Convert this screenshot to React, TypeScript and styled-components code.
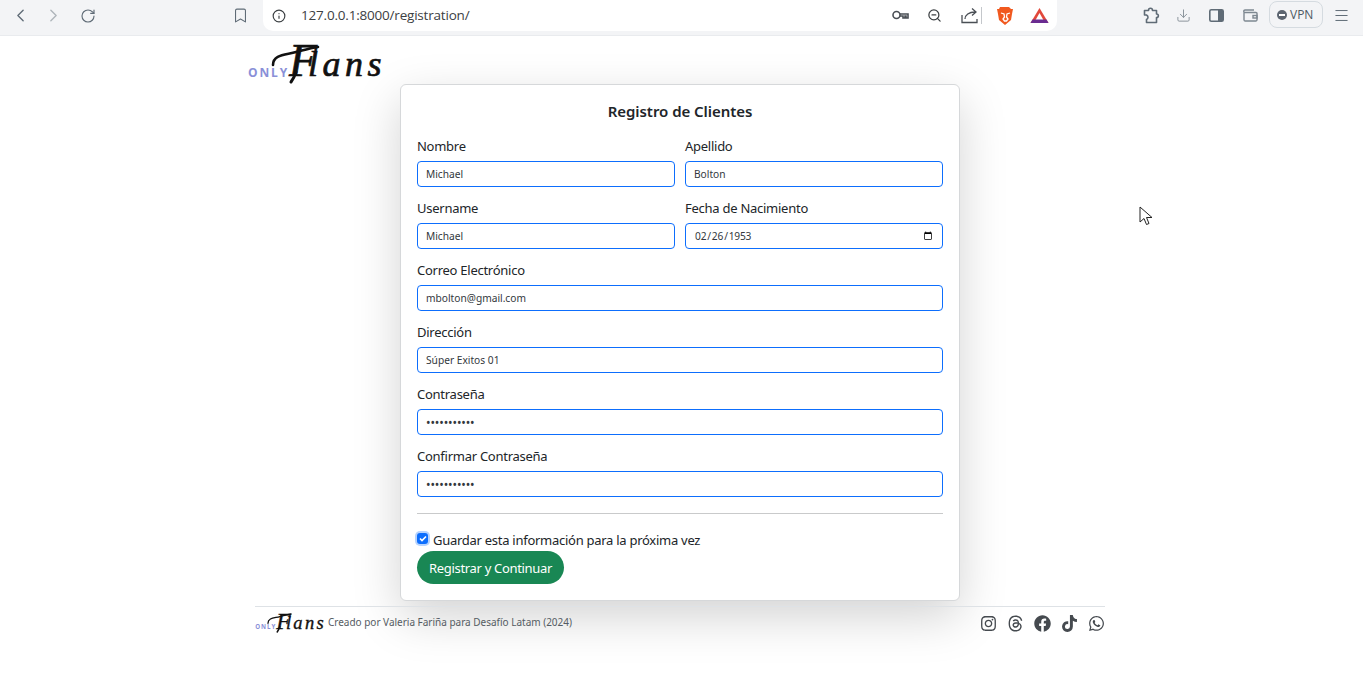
import React, {FC, ReactNode} from 'react';
import styled, {createGlobalStyle} from 'styled-components';
import {ChevronLeft, ChevronRight, RotateCw, Bookmark, Info, ZoomOut, Download, Menu} from 'lucide-react';
import {FaFacebook, FaInstagram, FaTiktok, FaWhatsapp} from 'react-icons/fa';
import {FaThreads} from 'react-icons/fa6';

const GlobalStyle = createGlobalStyle`
  *, *:before, *:after {
    box-sizing: border-box;
  }
  html, body {
    margin: 0;
    background: #fff;
    overflow: hidden;
  }
  body {
    font-family: "Noto Sans", "Open Sans", sans-serif;
    color: #212529;
  }
`;

const Page = styled.div`
  position: relative;
  width: 1363px;
  height: 682px;
  overflow: hidden;
`;

const Toolbar = styled.div`
  display: flex;
  align-items: flex-start;
  height: 36px;
  background: #f3f4f6;
  border-bottom: 1px solid #e9ebee;
`;

const Slot = styled.div<{$w: number; $ml?: number; $color?: string}>`
  display: flex;
  align-items: center;
  justify-content: center;
  flex: none;
  height: 31px;
  width: ${p => p.$w}px;
  margin-left: ${p => p.$ml ?? 0}px;
  color: ${p => p.$color ?? '#5f6b76'};
`;

const AddressBar = styled.div`
  display: flex;
  align-items: center;
  flex: none;
  width: 794px;
  height: 31px;
  margin-left: 11px;
  padding-left: 4px;
  background: #fff;
  border-radius: 0 0 10px 10px;
`;

const Url = styled.div`
  flex: 1;
  margin: -2px 0 0 10px;
  font-family: "Open Sans", sans-serif;
  font-size: 13.5px;
  letter-spacing: -0.2px;
  color: #3c4043;
`;

const Separator = styled.div`
  flex: none;
  width: 1px;
  height: 17px;
  background: #c4c7cb;
`;

const VpnPill = styled.div`
  display: flex;
  align-items: center;
  flex: none;
  gap: 3px;
  width: 54px;
  height: 27px;
  margin: 1px 0 0 7px;
  padding-left: 7px;
  border: 1px solid #d5dbe0;
  border-radius: 8px;
  font-family: "Open Sans", sans-serif;
  font-size: 12px;
  color: #4d5963;
`;

const VpnDot = styled.span`
  position: relative;
  width: 10px;
  height: 10px;
  border-radius: 50%;
  background: #5c6570;

  &:after {
    content: "";
    position: absolute;
    left: 2px;
    right: 2px;
    top: 4px;
    height: 2px;
    background: #fff;
  }
`;

const Main = styled.main`
  display: flex;
  flex-direction: column;
  align-items: center;
  width: 1360px;
`;

const Header = styled.header`
  width: 866px;
  height: 48px;
  padding: 9px 0 0 1px;
  line-height: 0;
`;

const Card = styled.form`
  width: 560px;
  height: 517px;
  padding: 15px 16px 16px;
  background: #fff;
  border: 1px solid #d6d8da;
  border-radius: 6px;
  box-shadow: 0 16px 48px rgba(0, 0, 0, 0.175);
`;

const Title = styled.h1`
  margin: 0 0 15px;
  font-size: 15px;
  line-height: 22px;
  font-weight: 600;
  letter-spacing: -0.05px;
  text-align: center;
`;

const Grid = styled.div`
  display: grid;
  grid-template-columns: 258px 258px;
  column-gap: 10px;
  row-gap: 12px;
`;

const Field = styled.label<{$wide?: boolean}>`
  display: block;
  height: 50px;
  grid-column: ${p => (p.$wide ? '1 / span 2' : 'auto')};
`;

const LabelText = styled.span`
  display: block;
  height: 24px;
  font-size: 13px;
  line-height: 18px;
  letter-spacing: -0.26px;
  color: #212529;
`;

const Input = styled.input`
  display: block;
  width: 100%;
  height: 26px;
  padding: 0 8px;
  background: #fff;
  border: 1px solid #0d6efd;
  border-radius: 4px;
  outline: none;
  font-family: inherit;
  font-size: 10.2px;
  color: #33383d;

  &[type='password'] {
    font-size: 12px;
    letter-spacing: -0.1px;
  }
  &[type='date'] {
    padding-right: 7px;
    letter-spacing: -0.2px;
  }
`;

const Divider = styled.hr`
  height: 1px;
  margin: 16px 0 16px;
  border: 0;
  background: #c9cacb;
`;

const CheckRow = styled.label`
  display: flex;
  align-items: center;
  gap: 5px;
  height: 21px;
  font-size: 13px;
  line-height: 21px;
  letter-spacing: -0.27px;
`;

const CheckBox = styled.span`
  display: flex;
  align-items: center;
  justify-content: center;
  flex: none;
  width: 11px;
  height: 11px;
  margin-bottom: 4px;
  background: #0d6efd;
  border-radius: 3px;
  box-shadow: 0 0 0 2px #b6d3fe;
  color: #fff;
`;

const SubmitButton = styled.button`
  display: block;
  height: 33px;
  padding: 0 12px 0 12px;
  background: #198754;
  border: 0;
  border-radius: 17px;
  font-family: inherit;
  font-size: 13px;
  letter-spacing: -0.32px;
  color: #fff;
`;

const Footer = styled.footer`
  display: flex;
  align-items: center;
  width: 850px;
  height: 33px;
  margin-top: 5px;
  border-top: 1px solid #dee2e6;
`;

const FooterText = styled.span`
  margin: -2px 0 0 5px;
  font-size: 10px;
  letter-spacing: -0.01px;
  color: #555c63;
`;

const Socials = styled.div`
  display: flex;
  align-items: center;
  gap: 10px;
  margin-left: auto;
  color: #454a4f;
  font-size: 17px;
`;

const CursorMark = styled.svg`
  position: absolute;
  left: 1139px;
  top: 206px;
`;

const Logo: FC<{small?: boolean}> = ({small}) => (
  <svg width={small ? 68 : 132} height={small ? 20 : 39} viewBox="0 0 132 39" overflow="visible">
    <text x="0" y="32" fontFamily="'Open Sans', sans-serif" fontWeight="700" fontSize="12" letterSpacing="1.9" fill="#8a90d8">ONLY</text>
    <path d="M25 20 C25 9 38 10 48 7 C56 5 63 3 70 2" fill="none" stroke="#111" strokeWidth="2.6" strokeLinecap="round" />
    <path d="M48 27 Q46 33 43 37" fill="none" stroke="#111" strokeWidth="3" strokeLinecap="round" />
    <text fontFamily="'Liberation Serif', serif" fontStyle="italic" fill="#111" stroke="#111" strokeWidth="0.7">
      <tspan x="41" y="31" fontSize="46">F</tspan>
      <tspan x="60" y="31" fontSize="36" letterSpacing="4.5">lans</tspan>
    </text>
  </svg>
);

const Labeled: FC<{label: string; wide?: boolean; children: ReactNode}> = ({label, wide, children}) => (
  <Field $wide={wide}>
    <LabelText>{label}</LabelText>
    {children}
  </Field>
);

const BrowserBar: FC = () => (
  <Toolbar>
    <Slot $w={24} $ml={8}><ChevronLeft size={21} strokeWidth={1.6} /></Slot>
    <Slot $w={24} $ml={9} $color="#aeb4ba"><ChevronRight size={21} strokeWidth={1.6} /></Slot>
    <Slot $w={24} $ml={11}><RotateCw size={16} strokeWidth={1.7} /></Slot>
    <Slot $w={24} $ml={128}><Bookmark size={17} strokeWidth={1.5} /></Slot>
    <AddressBar>
      <Slot $w={24} $color="#3c4043"><Info size={14} strokeWidth={2} /></Slot>
      <Url>127.0.0.1:8000/registration/</Url>
      <Slot $w={24} $color="#4a4f55">
        <svg width="17" height="11" viewBox="0 0 17 11" fill="none" stroke="currentColor" strokeWidth="1.6">
          <circle cx="4.5" cy="5" r="3.5" />
          <path d="M8 4h8v4h-2v-2h-1v2h-2v-2H8" />
        </svg>
      </Slot>
      <Slot $w={24} $ml={10} $color="#3c4043"><ZoomOut size={15} strokeWidth={2} /></Slot>
      <Slot $w={24} $ml={11} $color="#4a4f55">
        <svg width="17" height="17" viewBox="0 0 17 17" fill="none" stroke="currentColor" strokeWidth="1.3">
          <path d="M1 8v7.5h15V12" />
          <path d="M4 12c0-4 4-7 10-7M11 1.5L15 5l-4 3.5" />
        </svg>
      </Slot>
      <Separator />
      <Slot $w={24} $ml={10}>
        <svg width="17" height="20" viewBox="0 0 17 20">
          <path d="M4 1h9l2 2 2 0-1 5-1 6-6 5-6-5-1-6-1-5 2 0z" fill="#f1591f" />
          <path d="M5 7l3 1 .5 3-1.5 2 1.5 2h2l1.5-2-1.5-2 .5-3 3-1" fill="none" stroke="#fff" strokeWidth="1.3" />
        </svg>
      </Slot>
      <Slot $w={24} $ml={11}>
        <svg width="19" height="17" viewBox="0 0 19 17">
          <path d="M9.5 1L18.5 16H.5z" fill="#e2483b" />
          <path d="M9.5 6L14 14H5z" fill="#fff" />
          <path d="M.5 16l2-3.5h14l2 3.5z" fill="#6a2c91" />
        </svg>
      </Slot>
      <Slot $w={6} />
    </AddressBar>
    <Slot $w={24} $ml={82}>
      <svg width="17" height="17" viewBox="0 0 17 17" fill="none" stroke="currentColor" strokeWidth="1.6" strokeLinejoin="round">
        <path d="M1.5 3.5h4c0-3 4-3 4 0h4v3.5c2.5 0 2.5 3.5 0 3.5v5h-10v-3c2-1 2-3.5 0-4.5h-2z" />
      </svg>
    </Slot>
    <Slot $w={24} $ml={8} $color="#8c959d"><Download size={15} strokeWidth={1.6} /></Slot>
    <Slot $w={24} $ml={9}>
      <svg width="15" height="13" viewBox="0 0 15 13">
        <rect x="0.8" y="0.8" width="13.4" height="11.4" rx="1.5" fill="none" stroke="currentColor" strokeWidth="1.6" />
        <rect x="9" y="1" width="5" height="11" fill="currentColor" />
      </svg>
    </Slot>
    <Slot $w={24} $ml={10} $color="#7e8891">
      <svg width="15" height="13" viewBox="0 0 15 13" fill="none" stroke="currentColor" strokeWidth="1.4">
        <path d="M1 3.5V11a1.2 1.2 0 0 0 1.2 1H13a1.2 1.2 0 0 0 1-1V4.5a1 1 0 0 0-1-1H2a1 1 0 0 1 0-2.5h9" />
        <rect x="10" y="6.5" width="4" height="2.5" />
      </svg>
    </Slot>
    <VpnPill><VpnDot />VPN</VpnPill>
    <Slot $w={24} $ml={6}><Menu size={17} strokeWidth={1.4} /></Slot>
  </Toolbar>
);

const App: FC = () => (
  <Page>
    <GlobalStyle />
    <BrowserBar />
    <Main>
      <Header><Logo /></Header>
      <Card onSubmit={e => e.preventDefault()}>
        <Title>Registro de Clientes</Title>
        <Grid>
          <Labeled label="Nombre"><Input type="text" defaultValue="Michael" /></Labeled>
          <Labeled label="Apellido"><Input type="text" defaultValue="Bolton" /></Labeled>
          <Labeled label="Username"><Input type="text" defaultValue="Michael" /></Labeled>
          <Labeled label="Fecha de Nacimiento"><Input type="date" defaultValue="1953-02-26" /></Labeled>
          <Labeled label="Correo Electrónico" wide><Input type="email" defaultValue="mbolton@gmail.com" /></Labeled>
          <Labeled label="Dirección" wide><Input type="text" defaultValue="Súper Exitos 01" /></Labeled>
          <Labeled label="Contraseña" wide><Input type="password" defaultValue="michael1953" /></Labeled>
          <Labeled label="Confirmar Contraseña" wide><Input type="password" defaultValue="michael1953" /></Labeled>
        </Grid>
        <Divider />
        <CheckRow>
          <CheckBox>
            <svg width="8" height="7" viewBox="0 0 8 7" fill="none" stroke="#fff" strokeWidth="1.6">
              <path d="M1 3.5l2 2 4-4" />
            </svg>
          </CheckBox>
          Guardar esta información para la próxima vez
        </CheckRow>
        <SubmitButton type="submit">Registrar y Continuar</SubmitButton>
      </Card>
      <Footer>
        <Logo small />
        <FooterText>Creado por Valeria Fariña para Desafío Latam (2024)</FooterText>
        <Socials>
          <FaInstagram />
          <FaThreads />
          <FaFacebook />
          <FaTiktok />
          <FaWhatsapp />
        </Socials>
      </Footer>
    </Main>
    <CursorMark width="14" height="20" viewBox="0 0 14 20">
      <path d="M1 1v15l4-3.5 2.5 6 2.5-1-2.5-6H13z" fill="#fff" stroke="#222" strokeWidth="1" />
    </CursorMark>
  </Page>
);

export default App;
